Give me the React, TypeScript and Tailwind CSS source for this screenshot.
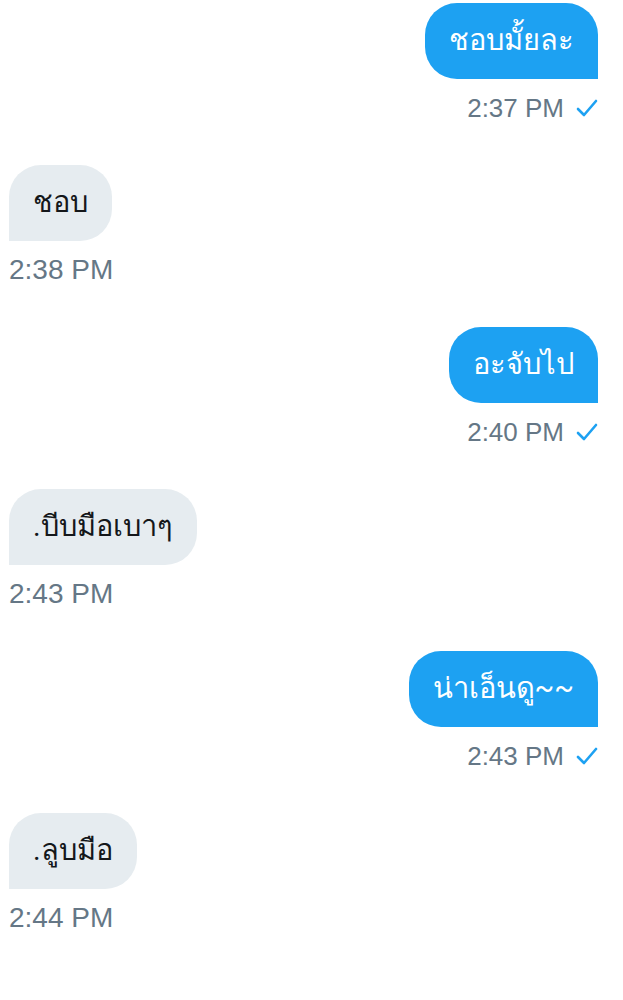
import React from 'react';

const MESSAGES = [
  { id: 1, mine: true, text: 'ชอบมั้ยละ', time: '2:37 PM' },
  { id: 2, mine: false, text: 'ชอบ', time: '2:38 PM' },
  { id: 3, mine: true, text: 'อะจับไป', time: '2:40 PM' },
  { id: 4, mine: false, text: '.บีบมือเบาๆ', time: '2:43 PM' },
  { id: 5, mine: true, text: 'น่าเอ็นดู~~', time: '2:43 PM' },
  { id: 6, mine: false, text: '.ลูบมือ', time: '2:44 PM' },
];

function Check() {
  return (
    <svg width="22" height="20" viewBox="0 0 22 20" fill="none" className="ml-3">
      <polyline points="2,11 8,17 20,3" stroke="#1da1f2" strokeWidth="2.6" strokeLinecap="round" strokeLinejoin="round" />
    </svg>
  );
}

export default function App() {
  return (
    <div className="w-[623px] h-[1000px] bg-white pt-[3px] pl-[9px] pr-[25px] font-['Roboto','Noto_Sans',sans-serif] flex flex-col gap-[42px]">
      {MESSAGES.map((m) => (
        <div key={m.id} className={`flex flex-col ${m.mine ? 'items-end' : 'items-start'}`}>
          <div
            className={`h-[76px] flex items-center px-6 text-[29px] rounded-[32px] ${
              m.mine ? 'bg-[#1da1f2] text-white rounded-br-none' : 'bg-[#e6ecf0] text-[#14171a] rounded-bl-none'
            }`}
          >
            {m.text}
          </div>
          <div
            className={`mt-[14px] h-[30px] flex items-center font-['Liberation_Sans',sans-serif] text-[#657786] ${
              m.mine ? 'text-[26px]' : 'text-[28px]'
            }`}
          >
            <span>{m.time}</span>
            {m.mine && <Check />}
          </div>
        </div>
      ))}
    </div>
  );
}
